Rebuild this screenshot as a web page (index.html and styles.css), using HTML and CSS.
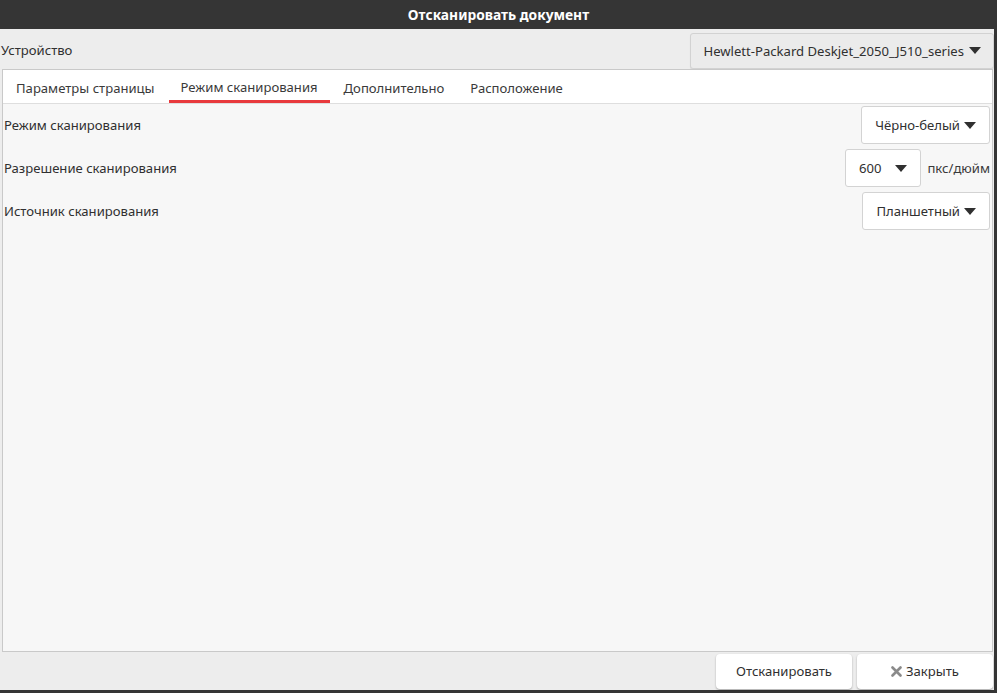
FILE: index.html
```html
<!DOCTYPE html>
<html lang="ru">
<head>
    <meta charset="UTF-8">
    <title>Отсканировать документ</title>
    <link rel="stylesheet" href="styles.css">
</head>
<body>
    <div class="titlebar">Отсканировать документ</div>

    <div class="frame">
        <div class="dialog">
            <div class="device-row">
                <span class="label">Устройство</span>
                <div class="device-button">
                    Hewlett-Packard Deskjet_2050_J510_series
                    <span class="arrow"></span>
                </div>
            </div>

            <div class="notebook">
                <div class="tabs">
                    <div class="tab">Параметры страницы</div>
                    <div class="tab active">Режим сканирования</div>
                    <div class="tab">Дополнительно</div>
                    <div class="tab">Расположение</div>
                </div>
                <div class="page">
                    <div class="row">
                        <span class="label">Режим сканирования</span>
                        <div class="combo">Чёрно-белый <span class="arrow"></span></div>
                    </div>
                    <div class="row">
                        <span class="label">Разрешение сканирования</span>
                        <div class="combo-group">
                            <div class="combo wide">600 <span class="arrow"></span></div>
                            <span class="unit">пкс/дюйм</span>
                        </div>
                    </div>
                    <div class="row">
                        <span class="label">Источник сканирования</span>
                        <div class="combo">Планшетный <span class="arrow"></span></div>
                    </div>
                </div>
            </div>

            <div class="actions">
                <div class="button">Отсканировать</div>
                <div class="button">
                    <svg class="close-icon" width="11" height="11" viewBox="0 0 11 11">
                        <path d="M1.5 1.5 L9.5 9.5 M9.5 1.5 L1.5 9.5" stroke="#8a8a8a" stroke-width="2.6" stroke-linecap="round"/>
                    </svg>
                    Закрыть
                </div>
            </div>
        </div>
    </div>
</body>
</html>
```

FILE: styles.css
```css
html, body {
    margin: 0;
    padding: 0;
}

body {
    width: 997px;
    height: 693px;
    overflow: hidden;
    font-family: "Noto Sans", "DejaVu Sans", sans-serif;
    font-size: 13.1px;
    color: #303030;
    background-color: #ededed;
}

.titlebar {
    height: 29px;
    line-height: 29px;
    background-color: #353535;
    color: #ffffff;
    font-size: 13.8px;
    font-weight: bold;
    text-align: center;
}

.frame {
    height: 661px;
    border-right: 3px solid #353535;
    border-bottom: 3px solid #353535;
}

.dialog {
    height: 100%;
    display: flex;
    flex-direction: column;
    background-color: #ededed;
}

.device-row {
    height: 40px;
    display: flex;
    justify-content: space-between;
    align-items: center;
    padding-left: 1px;
}

.device-row > .label {
    padding-top: 2px;
}

.device-button {
    display: flex;
    align-items: center;
    gap: 5px;
    height: 36px;
    margin-top: 3px;
    padding: 0 12px 0 12px;
    background-color: #ebebeb;
    border: 1px solid #d2d2d2;
    border-radius: 3px;
    box-shadow: 0 1px 1px rgba(0, 0, 0, 0.08);
    box-sizing: border-box;
}

.arrow {
    display: inline-block;
    width: 0;
    height: 0;
    border-left: 6px solid transparent;
    border-right: 6px solid transparent;
    border-top: 7px solid #303030;
}

.notebook {
    flex: 1;
    display: flex;
    flex-direction: column;
    margin: 0 1px 0 2px;
    border: 1px solid #c9c9c9;
}

.tabs {
    display: flex;
    gap: 2px;
    height: 33px;
    padding-left: 1px;
    background-color: #ffffff;
    border-bottom: 1px solid #dedede;
}

.tab {
    padding: 1px 12px 0;
    line-height: 35px;
    color: #3a3a3a;
}

.tab.active {
    border-bottom: 3px solid #e8393d;
    line-height: 32px;
}

.page {
    flex: 1;
    display: flex;
    flex-direction: column;
    gap: 5px;
    padding: 2px 2px 0 1px;
    background-color: #f7f7f7;
}

.row {
    height: 38px;
    display: flex;
    justify-content: space-between;
    align-items: center;
}

.combo-group {
    display: flex;
    align-items: center;
    gap: 6px;
}

.combo {
    display: flex;
    align-items: center;
    gap: 4px;
    height: 38px;
    padding: 0 13px;
    background-color: #ffffff;
    border: 1px solid #d3d3d3;
    border-radius: 3px;
    box-sizing: border-box;
}

.combo.wide {
    gap: 14px;
}

.unit {
    color: #3a3a3a;
}

.actions {
    height: 38px;
    display: flex;
    justify-content: flex-end;
    align-items: center;
    gap: 5px;
    padding-right: 1px;
}

.button {
    width: 136px;
    height: 35px;
    display: flex;
    justify-content: center;
    align-items: center;
    gap: 4px;
    background-color: #ffffff;
    border-radius: 4px;
    box-shadow: 0 1px 2px rgba(0, 0, 0, 0.3);
}
```
